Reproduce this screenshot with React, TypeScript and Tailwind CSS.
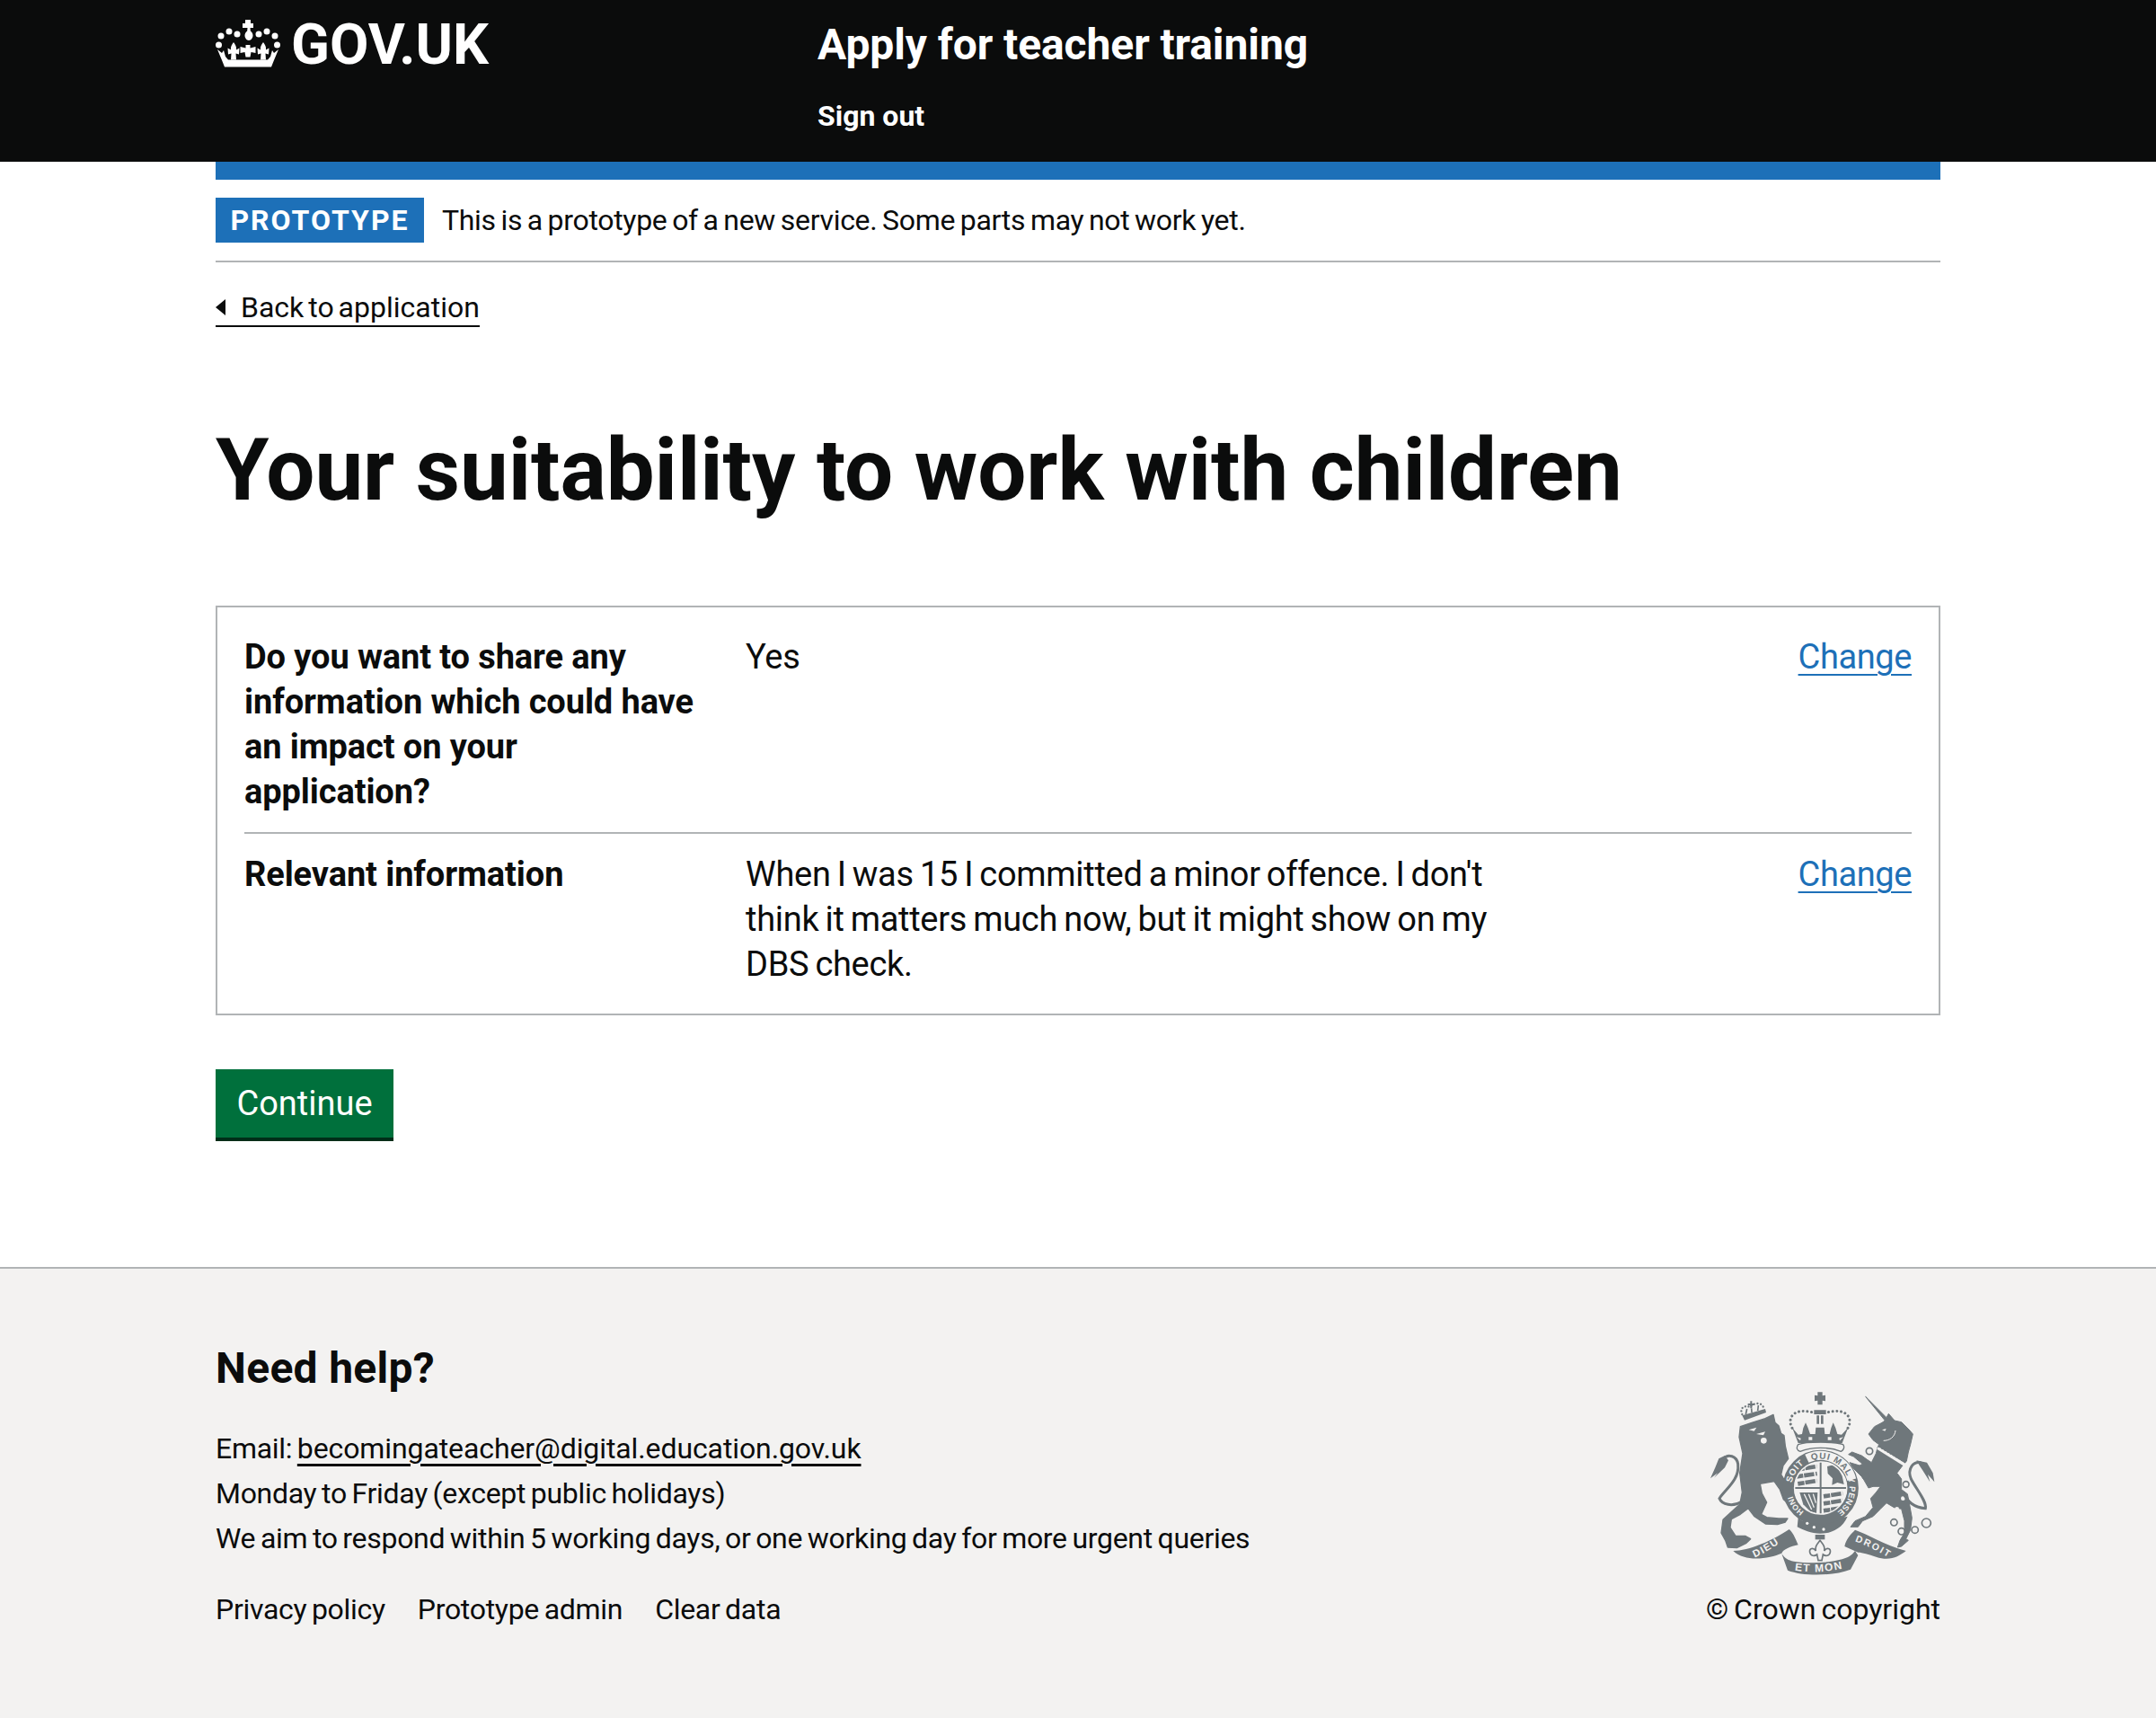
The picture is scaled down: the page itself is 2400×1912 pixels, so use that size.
const body = 'font-["Roboto",sans-serif]'
const grey = '#6f777b'
const paper = '#f3f2f1'

function Crown() {
  return (
    <svg viewBox="0 0 72 54" className="h-[54px] w-[72px] shrink-0" fill="#fff">
      <path d="M33 0h6v4h3v5h-3.500l.3 3.500c1.700 1.300 2.700 3 2.700 5 0 2.500-2 5.500-4.500 5.500s-4.500-3-4.500-5.500c0-2 1-3.700 2.700-5l.3-3.500H30V4h3z" />
      <circle cx="6" cy="18" r="3.500" />
      <circle cx="15" cy="13" r="3.500" />
      <circle cx="24" cy="16" r="3.500" />
      <circle cx="48" cy="16" r="3.500" />
      <circle cx="57" cy="13" r="3.500" />
      <circle cx="66" cy="18" r="3.500" />
      <circle cx="3.500" cy="28" r="3.500" />
      <circle cx="68.500" cy="28" r="3.500" />
      <path d="M33.500 28h5v3.500l6-1.500v7l-5-1-1 5.500h-5l-1-5.500-5 1v-7l6 1.500z" />
      <path d="M20 25c2 3 3.500 5 3 8.500l3.500-2-.5 7-3.500-1 .5 7h-6l.5-7-3.500 1-.5-7 3.500 2c-.5-3.500 1-5.500 3-8.500z" />
      <path d="M53 25c2 3 3.500 5 3 8.500l3.500-2-.5 7-3.500-1 .5 7h-6l.5-7-3.500 1-.5-7 3.500 2c-.5-3.500 1-5.500 3-8.500z" />
      <path d="M2 33l5 4 2-3 2 7 3 3.500h44l3-3.500 2-7 2 3 5-4-5 12-3 7.500H10L7 45z" />
    </svg>
  )
}

// royal arms, drawn on a 3x grid
function Crest() {
  return (
    <svg viewBox="0 0 780 645" className="block h-[215px] w-[260px]" fill={grey}>
      <defs>
        <path id="soit" d="M284 313A97 97 0 0 1 334 244" />
        <path id="qui" d="M350 238A97 97 0 0 1 468 289" />
        <path id="honi" d="M324 409A97 97 0 0 1 286 355" />
        <path id="pense" d="M471 297A97 97 0 0 1 436 409" />
        <path id="dieu" d="M160 562Q210 540 258 503" />
        <path id="droit" d="M494 508Q557 530 622 572" />
        <path id="etmon" d="M293 605Q378 618 462 597" />
        <clipPath id="shield"><circle cx="380" cy="330" r="85" /></clipPath>
      </defs>

      {/* lion */}
      <path
        d="M112 125L150 112L195 98L222 85L228 112L240 122L248 148L258 155L262 190L272 232L255 255L248 285L268 318L284 355L288 385L270 380L256 368L244 335L225 308L178 316L184 348L200 378L182 418L200 428L240 432L270 432L262 444L236 452L196 450L158 424L138 398L112 418L82 434L78 462L96 490L128 490L146 500L132 514L100 530L70 528L62 505L48 480L54 436L84 408L110 385L118 345L110 280L120 215L108 160Z"
        stroke={grey}
        strokeWidth="4"
        strokeLinejoin="round"
      />
      <path d="M118 375C85 395 50 385 42 365C60 335 110 305 104 250C100 222 70 215 56 232" fill="none" stroke={grey} strokeWidth="9" />
      <path d="M60 222L40 232L28 262L12 298L36 280L24 296L60 262L72 238Z" />
      <path d="M140 136l26-8-8 12zM165 150l30-8-6 12z" fill={paper} />
      <circle cx="190" cy="172" r="10" fill={paper} />

      {/* lion's crown */}
      <path d="M118 88L195 66L198 78L126 104Z" />
      <path d="M118 84C108 64 125 52 145 60C155 44 188 42 190 66" fill="none" stroke={grey} strokeWidth="7" strokeLinecap="round" strokeDasharray="0.1 11" />
      <path d="M130 84l4-18M150 78l-1-14M170 72l2-18" stroke={grey} strokeWidth="5" />
      <path d="M145 40h6v8h8v6h-8v10h-6V54h-8v-6h8z" />

      {/* royal crown */}
      <path d="M370 10h16v12l10-2v20l-10-2v14h-16V38l-10 2V20l10 2z" />
      <path d="M358 70h40v14h-40zM367 88h8v28h-8zM381 88h8v28h-8z" />
      <path d="M285 130C268 100 285 60 355 78M471 130C488 100 471 60 401 78" fill="none" stroke={grey} strokeWidth="9" strokeLinecap="round" strokeDasharray="0.1 14" />
      <path d="M285 128L305 152L318 150L322 130L330 112L338 130L345 150L362 150L364 128H392L394 150L410 150L415 130L422 112L430 130L436 150L450 152L472 128L452 180L305 180Z" />
      <path d="M300 160l14 4-2 8zM456 160l-14 4 2 8zM340 160h12v10h-12zM404 160h12v10h-12z" fill={paper} />
      <path d="M305 185C330 175 430 175 455 185C462 195 455 205 448 208C410 192 350 192 312 208C300 205 298 195 305 185Z" fill={paper} stroke={grey} strokeWidth="4" />

      {/* garter */}
      <circle cx="380" cy="330" r="108" fill="none" stroke={grey} strokeWidth="37" />
      <path d="M334 232A108 108 0 0 1 484 302" fill="none" stroke={paper} strokeWidth="30" />
      <circle cx="380" cy="330" r="88" fill={paper} />
      <path d="M305 430C330 455 420 460 450 430L470 425C450 470 410 482 378 482C350 482 320 470 302 460Z" />
      <circle cx="335" cy="448" r="5" fill={paper} />
      <circle cx="358" cy="461" r="5" fill={paper} />
      <circle cx="390" cy="468" r="5" fill={paper} />

      {/* shield */}
      <g clipPath="url(#shield)">
        <path d="M377 240h6v180h-6zM290 327h180v6H290z" />
        <g fill="none" stroke={grey} strokeWidth="14" strokeDasharray="22 3 34 5">
          <path d="M304 268L368 258M300 292L368 282M304 316L368 306" />
          <path d="M390 358L454 348M390 382L454 372M390 406L454 396" />
        </g>
        <path d="M402 258L425 252L440 268L452 290L458 318L436 312L418 320L420 298L404 282Z" />
        <path d="M310 345L370 345L366 415L345 408L322 385Z" />
        <path d="M325 350L350 402M340 350L358 395M355 350L364 380" fill="none" stroke={paper} strokeWidth="4" />
      </g>

      <g fontFamily="Liberation Sans, sans-serif" fontWeight="700">
        <text fill={paper} fontSize="30" letterSpacing="2"><textPath href="#soit">SOIT</textPath></text>
        <text fill={grey} fontSize="30" letterSpacing="2.500"><textPath href="#qui">QUI MAL</textPath></text>
        <text fill={paper} fontSize="26"><textPath href="#honi">HONI</textPath></text>
        <text fill={paper} fontSize="28" letterSpacing="1"><textPath href="#pense">Y PENSE</textPath></text>
      </g>

      {/* unicorn */}
      <path
        d="M530 25L600 95L607 82L627 105L650 110L675 135L688 150L680 185L673 210L667 240L650 260L635 280L650 300L650 335L670 350L675 375L685 430L680 470L665 500L673 505L650 525L637 528L645 505L660 480L660 440L650 400L625 395L600 380L580 400L555 425L520 440L505 460L480 460L495 440L530 425L555 395L547 365L565 345L580 325L555 325L540 330L520 295L490 265L477 245L510 255L520 250L490 225L473 218L485 210L517 222L535 235L550 245L565 215L570 195L575 185L555 170L540 150L560 125L585 112L595 105Z"
        stroke={grey}
        strokeWidth="3"
        strokeLinejoin="round"
      />
      <path d="M590 172C610 172 628 160 630 138" fill="none" stroke={paper} strokeWidth="3" />
      <path d="M585 136l14-4-4 8z" fill={paper} />
      <path d="M570 196L660 252" fill="none" stroke={paper} strokeWidth="10" />
      <path d="M574 190L664 244" fill="none" stroke={grey} strokeWidth="7" strokeDasharray="6 5" />
      <circle cx="655" cy="365" r="7" fill={paper} />
      <circle cx="635" cy="400" r="7" fill={paper} />
      <g fill="none" stroke={grey} strokeWidth="5">
        <circle cx="543" cy="207" r="11" />
        <circle cx="530" cy="290" r="11" />
        <circle cx="665" cy="318" r="10" />
        <circle cx="625" cy="445" r="11" />
        <circle cx="650" cy="475" r="11" />
        <circle cx="695" cy="470" r="11" />
        <circle cx="733" cy="447" r="15" />
      </g>
      <path d="M655 345C670 375 690 395 730 398C735 375 700 335 682 300C668 265 690 240 715 245" fill="none" stroke={grey} strokeWidth="9" />
      <path d="M700 238L735 245L755 280L760 310L738 285L745 310L720 270L710 255Z" />

      {/* ribbon */}
      <path d="M88 540C140 540 220 505 275 468C290 480 300 510 305 520C280 525 255 535 250 548C210 565 130 580 88 540Z" />
      <path d="M250 550C262 566 272 572 290 575C340 582 400 582 452 568C470 562 484 556 495 540L505 555L480 602C420 625 320 625 270 605Z" />
      <path d="M495 470C540 485 590 520 665 540C640 560 610 575 565 560C540 552 520 545 505 545L460 525C465 500 480 485 495 470Z" />
      <path d="M378 505C388 518 395 525 392 540C400 528 415 530 412 545C410 558 395 558 388 552L384 572H372L368 552C361 558 346 558 344 545C341 530 356 528 364 540C361 525 368 518 378 505Z" fill={paper} stroke={grey} strokeWidth="5" />
      <path d="M362 486h32v16h-32z" />

      <g fill={paper} fontFamily="Liberation Sans, sans-serif" fontWeight="700">
        <text fontSize="34" letterSpacing="4"><textPath href="#dieu">DIEU</textPath></text>
        <text fontSize="32" letterSpacing="6"><textPath href="#droit">DROIT</textPath></text>
        <text fontSize="36" letterSpacing="4"><textPath href="#etmon">ET MON</textPath></text>
      </g>
    </svg>
  )
}

function Row({ label, value, last }: { label: string; value: string; last?: boolean }) {
  return (
    <div className={`flex py-[20px] text-[38px] leading-[50px] ${last ? '' : 'border-b-2 border-[#b1b4b6]'}`}>
      <div className="w-[558px] shrink-0 pr-[50px] font-bold tracking-[-0.1px]">{label}</div>
      <div className="w-[860px] shrink-0 pr-[20px] tracking-[-0.3px] [word-spacing:-2px]">{value}</div>
      <div className="flex-1 text-right tracking-[-0.4px] text-[#1d70b8] underline decoration-2 underline-offset-[6px]">Change</div>
    </div>
  )
}

export default function App() {
  return (
    <div className={`flex min-h-[1912px] flex-col bg-white text-[#0b0c0c] ${body}`}>
      <header className="h-[180px] bg-[#0b0c0c] text-white">
        <div className="mx-auto flex w-[1920px]">
          <div className="flex h-[96px] w-[670px] items-center gap-[12px] pt-[2px]">
            <Crown />
            <span className="text-[63px] font-bold leading-none">GOV.UK</span>
          </div>
          <div className="pt-[20px]">
            <div className="text-[48px] font-bold leading-[60px] tracking-[-0.1px]">Apply for teacher training</div>
            <div className="mt-[29px] text-[32px] font-bold leading-[40px]">Sign out</div>
          </div>
        </div>
      </header>

      <main className="mx-auto w-[1920px]">
        <div className="h-[20px] bg-[#1d70b8]" />
        <div className="flex h-[92px] items-start border-b-2 border-[#b1b4b6] pt-[20px]">
          <span className="flex h-[50px] w-[232px] items-center justify-center bg-[#1d70b8] text-[32px] font-bold tracking-[2px] text-white">PROTOTYPE</span>
          <span className="ml-[20px] text-[32px] leading-[50px] tracking-[-0.3px] [word-spacing:-2px]">This is a prototype of a new service. Some parts may not work yet.</span>
        </div>
        <a className="mt-[30px] flex h-[42px] w-fit items-center border-b-2 border-[#0b0c0c] text-[32px] leading-[40px] [word-spacing:-3px]">
          <span className="mr-[17px] h-0 w-0 border-y-[9px] border-r-[11px] border-y-transparent border-r-[#0b0c0c]" />
          Back to application
        </a>
        <h1 className="mt-[109px] text-[96px] font-bold leading-[100px] tracking-[-0.1px]">Your suitability to work with children</h1>
        <div className="mt-[101px] border-2 border-[#b1b4b6] px-[30px] py-[10px]">
          <Row label="Do you want to share any information which could have an impact on your application?" value="Yes" />
          <Row last label="Relevant information" value="When I was 15 I committed a minor offence. I don't think it matters much now, but it might show on my DBS check." />
        </div>
        <button className="mt-[60px] h-[80px] w-[198px] border-b-4 border-[#002d18] bg-[#00703c] text-[38px] text-white">Continue</button>
      </main>

      <footer className="mt-[140px] flex-1 border-t-2 border-[#b1b4b6] bg-[#f3f2f1]">
        <div className="mx-auto flex w-[1920px] items-end justify-between pt-[81px]">
          <div>
            <h2 className="text-[48px] font-bold leading-[60px] tracking-[0.3px]">Need help?</h2>
            <div className="mt-[34px] text-[32px] leading-[50px] tracking-[-0.3px] [word-spacing:-2px]">
              <p>Email: <a className="tracking-[-0.1px] underline underline-offset-[6px]">becomingateacher@digital.education.gov.uk</a></p>
              <p>Monday to Friday (except public holidays)</p>
              <p>We aim to respond within 5 working days, or one working day for more urgent queries</p>
            </div>
            <div className="mt-[29px] flex gap-[36px] text-[32px] leading-[50px] tracking-[-0.3px] [word-spacing:-2px]">
              <a>Privacy policy</a>
              <a>Prototype admin</a>
              <a>Clear data</a>
            </div>
          </div>
          <div className="flex flex-col items-end">
            <Crest />
            <span className="mt-[5px] text-[32px] leading-[50px] [word-spacing:-2px]">© Crown copyright</span>
          </div>
        </div>
      </footer>
    </div>
  )
}
